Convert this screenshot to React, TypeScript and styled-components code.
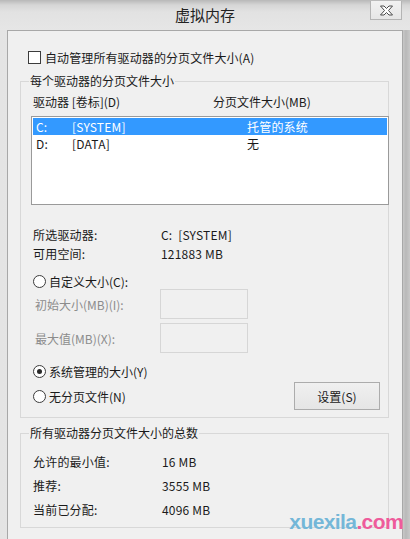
import React from "react";
import styled, { createGlobalStyle } from "styled-components";

const GlobalStyle = createGlobalStyle`
  html, body {
    margin: 0;
    padding: 0;
    background: #e8e8e8;
  }
  body {
    font-family: "Noto Sans CJK SC", "Liberation Sans", sans-serif;
    font-size: 12px;
    color: #1a1a1a;
  }
`;

const Window = styled.div`
  position: relative;
  width: 410px;
  height: 539px;
  overflow: hidden;
  display: flex;
  flex-direction: column;
  background: linear-gradient(to right, #e4e4e4 0, #ececec 50%, #e2e2e2 97%, #b9b9b9 99%, #c8c8c8 100%);
`;

const TitleBar = styled.div`
  height: 30px;
  flex: none;
  display: grid;
  grid-template-columns: 1fr auto 1fr;
  align-items: start;
  background: linear-gradient(to bottom, #b8b8b8 0, #d6d6d6 5px, #e2e2e2 12px, #e6e6e6 100%);
`;

const Title = styled.div`
  grid-column: 2;
  font-size: 15px;
  line-height: 30px;
  color: #222;
`;

const CloseButton = styled.div`
  grid-column: 3;
  justify-self: end;
  margin: 1px 8px 0 0;
  width: 30px;
  height: 18px;
  border: 1px solid #b4b4b4;
  border-top: none;
  background: linear-gradient(to bottom, #f2f2f2, #e6e6e6);
  display: flex;
  align-items: center;
  justify-content: center;
`;

const Panel = styled.div`
  flex: 1;
  margin: 0 7px 0 7px;
  border: 1px solid #a8a8a8;
  border-bottom: none;
  background: #f0f0f0;
  padding: 19px 13px 0 12px;
  display: flex;
  flex-direction: column;
`;

const CheckRow = styled.label`
  display: flex;
  align-items: center;
  gap: 4px;
  height: 15px;
  line-height: 15px;
  padding-left: 8px;
  letter-spacing: 0.1px;
`;

const CheckBox = styled.span`
  width: 11px;
  height: 11px;
  border: 1px solid #3c3c3c;
  background: #fff;
  flex: none;
`;

const Group = styled.fieldset<{ $top: number; $pad: string }>`
  margin: ${({ $top }) => $top}px 0 0 0;
  padding: ${({ $pad }) => $pad};
  border: 1px solid #d8d8d8;
  min-width: 0;
`;

const Legend = styled.legend`
  padding: 0 1px;
  margin-left: 8px;
  line-height: 16px;
  font-size: 12px;
  color: #1a1a1a;
`;

const HeaderRow = styled.div`
  display: grid;
  grid-template-columns: 180px 1fr;
  padding-left: 12px;
  line-height: 16px;
`;

const ListBox = styled.div`
  margin: 6px 0 0 10px;
  width: 358px;
  height: 89px;
  box-sizing: border-box;
  border: 1px solid #9a9a9a;
  background: #fff;
  padding: 1px;
`;

const ListRow = styled.div<{ $selected?: boolean }>`
  display: grid;
  grid-template-columns: 36px 175px 1fr;
  height: 17px;
  line-height: 17px;
  padding-left: 3px;
  letter-spacing: 0.2px;
  background: ${({ $selected }) => ($selected ? "#3399ff" : "transparent")};
  color: ${({ $selected }) => ($selected ? "#fff" : "#1a1a1a")};
`;

const InfoRow = styled.div<{ $col: number; $height: number }>`
  display: grid;
  grid-template-columns: ${({ $col }) => $col}px 1fr;
  padding-left: 12px;
  height: ${({ $height }) => $height}px;
  line-height: ${({ $height }) => $height}px;
  letter-spacing: 0.2px;
`;

const RadioRow = styled.label<{ $top: number }>`
  display: flex;
  align-items: center;
  gap: 3px;
  height: 18px;
  margin-top: ${({ $top }) => $top}px;
  padding-left: 12px;
`;

const Radio = styled.span<{ $checked?: boolean }>`
  width: 11px;
  height: 11px;
  border: 1px solid #3c3c3c;
  border-radius: 50%;
  background: #fff;
  flex: none;
  display: flex;
  align-items: center;
  justify-content: center;

  &::after {
    content: "";
    width: 5px;
    height: 5px;
    border-radius: 50%;
    background: ${({ $checked }) => ($checked ? "#2a2a2a" : "transparent")};
  }
`;

const FieldRow = styled.div<{ $top: number }>`
  display: grid;
  grid-template-columns: 125px 88px;
  align-items: center;
  margin-top: ${({ $top }) => $top}px;
  padding-left: 14px;
  color: #8c8c8c;
`;

const TextInput = styled.div`
  height: 30px;
  box-sizing: border-box;
  border: 1px solid #d6d6d6;
  background: #f0f0f0;
`;

const BottomRow = styled.div`
  display: flex;
  align-items: center;
  justify-content: space-between;
  margin-top: 2px;
  padding-right: 8px;
`;

const Button = styled.div`
  width: 86px;
  height: 28px;
  box-sizing: border-box;
  border: 1px solid #acacac;
  background: linear-gradient(to bottom, #f0f0f0, #e5e5e5);
  display: flex;
  align-items: center;
  justify-content: center;
  color: #1a1a1a;
`;

const Watermark = styled.div`
  position: absolute;
  right: 7px;
  bottom: 6px;
  font-family: "Liberation Sans", Arial, sans-serif;
  font-weight: bold;
  font-size: 21px;
  line-height: 22px;
  letter-spacing: -0.6px;
  color: #74b7d8;

  span {
    color: #ee5b9b;
  }
`;

const CloseIcon = () => (
  <svg width="15" height="11" viewBox="0 0 15 11">
    <path
      d="M1.5 1 L5 1 L7.5 3.5 L10 1 L13.5 1 L9.5 5.5 L13.5 10 L10 10 L7.5 7.5 L5 10 L1.5 10 L5.5 5.5 Z"
      fill="#fff"
      stroke="#4a4a4a"
      strokeWidth="1"
      strokeLinejoin="round"
    />
  </svg>
);

export default function App() {
  return (
    <Window>
      <GlobalStyle />
      <TitleBar>
        <Title>虚拟内存</Title>
        <CloseButton>
          <CloseIcon />
        </CloseButton>
      </TitleBar>
      <Panel>
        <CheckRow>
          <CheckBox />
          自动管理所有驱动器的分页文件大小(A)
        </CheckRow>

        <Group $top={8} $pad="5px 0 7px 0">
          <Legend>每个驱动器的分页文件大小</Legend>
          <HeaderRow>
            <span>驱动器 [卷标](D)</span>
            <span>分页文件大小(MB)</span>
          </HeaderRow>
          <ListBox>
            <ListRow $selected>
              <span>C:</span>
              <span>[SYSTEM]</span>
              <span>托管的系统</span>
            </ListRow>
            <ListRow>
              <span>D:</span>
              <span>[DATA]</span>
              <span>无</span>
            </ListRow>
          </ListBox>

          <div style={{ height: 20 }} />
          <InfoRow $col={128} $height={19}>
            <span>所选驱动器:</span>
            <span>C:&nbsp;&nbsp;[SYSTEM]</span>
          </InfoRow>
          <InfoRow $col={128} $height={19}>
            <span>可用空间:</span>
            <span>121883 MB</span>
          </InfoRow>

          <RadioRow $top={9}>
            <Radio />
            自定义大小(C):
          </RadioRow>
          <FieldRow $top={-1}>
            <span>初始大小(MB)(I):</span>
            <TextInput />
          </FieldRow>
          <FieldRow $top={4}>
            <span>最大值(MB)(X):</span>
            <TextInput />
          </FieldRow>

          <RadioRow $top={9}>
            <Radio $checked />
            系统管理的大小(Y)
          </RadioRow>
          <BottomRow>
            <RadioRow $top={0}>
              <Radio />
              无分页文件(N)
            </RadioRow>
            <Button>设置(S)</Button>
          </BottomRow>
        </Group>

        <Group $top={7} $pad="9px 0 5px 0">
          <Legend>所有驱动器分页文件大小的总数</Legend>
          <InfoRow $col={129} $height={24}>
            <span>允许的最小值:</span>
            <span>16 MB</span>
          </InfoRow>
          <InfoRow $col={129} $height={24}>
            <span>推荐:</span>
            <span>3555 MB</span>
          </InfoRow>
          <InfoRow $col={129} $height={24}>
            <span>当前已分配:</span>
            <span>4096 MB</span>
          </InfoRow>
        </Group>
      </Panel>
      <Watermark>
        xuexila<span>.com</span>
      </Watermark>
    </Window>
  );
}
